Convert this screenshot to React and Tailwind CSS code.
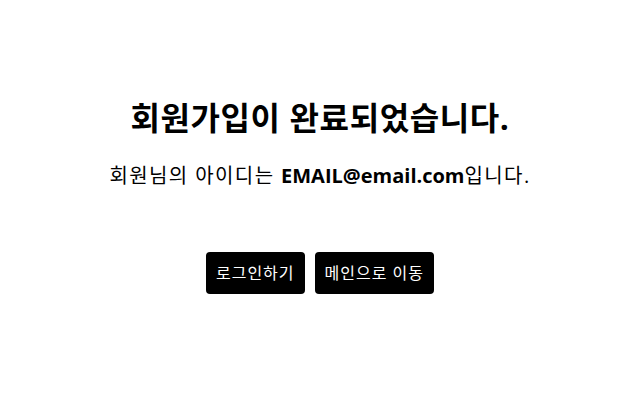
import React from 'react';

export default function App() {
  return (
    <div className="w-[627px] h-[420px] bg-white flex flex-col items-center pl-[13px] text-black" style={{ fontFamily: '"Open Sans", "Noto Sans CJK KR", sans-serif' }}>
      <h1 className="mt-[98px] text-[32px] font-bold leading-[40px] tracking-[0.6px]">회원가입이 완료되었습니다.</h1>
      <p className="mt-[24px] text-[20px] leading-[28px]">
        <span className="tracking-[1.4px]">회원님의 아이디는 </span>
        <span className="font-bold">EMAIL@email.com</span>
        <span className="tracking-[1.4px]">입니다.</span>
      </p>
      <div className="mt-[62px] flex gap-[10px]">
        <button className="h-[42px] px-[10px] bg-black text-white text-[16px] tracking-[1px] rounded-[4px]">로그인하기</button>
        <button className="h-[42px] px-[10px] bg-black text-white text-[16px] tracking-[1px] rounded-[4px]">메인으로 이동</button>
      </div>
    </div>
  );
}
